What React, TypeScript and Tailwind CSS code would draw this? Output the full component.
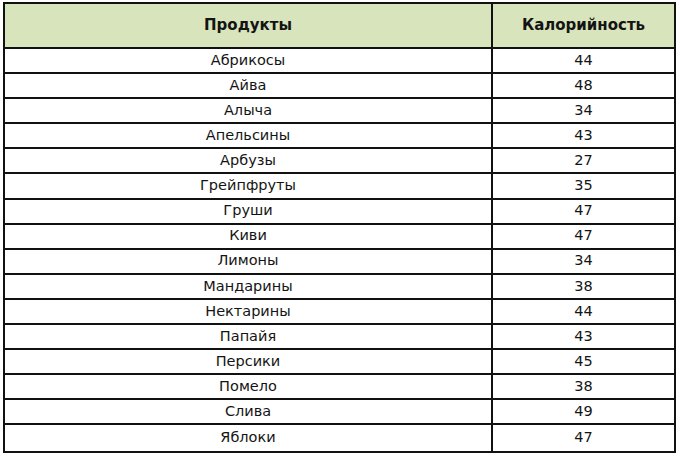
const ROWS: [string, number][] = [
  ['Абрикосы', 44],
  ['Айва', 48],
  ['Алыча', 34],
  ['Апельсины', 43],
  ['Арбузы', 27],
  ['Грейпфруты', 35],
  ['Груши', 47],
  ['Киви', 47],
  ['Лимоны', 34],
  ['Мандарины', 38],
  ['Нектарины', 44],
  ['Папайя', 43],
  ['Персики', 45],
  ['Помело', 38],
  ['Слива', 49],
  ['Яблоки', 47],
]

const FONT = "font-['Verdana','DejaVu_Sans',sans-serif]"

export default function App() {
  return (
    <div className={`h-[456px] w-[680px] bg-white pl-[3px] pt-[2px] text-[#141414] ${FONT}`}>
      <div className="flex w-[673px] flex-col border-2 border-[#111]">
        <div className="flex h-[45px] border-b-2 border-[#111] bg-[#d8e4bc] text-[15px] font-bold">
          <div className="flex w-[488px] items-center justify-center border-r-2 border-[#111]">
            Продукты
          </div>
          <div className="flex flex-1 items-center justify-center">Калорийность</div>
        </div>
        {ROWS.map(([name, kcal], i) => (
          <div
            key={name}
            className={`flex h-[25.1px] text-[14.5px] ${i < ROWS.length - 1 ? 'border-b-2 border-[#111]' : ''}`}
          >
            <div className="flex w-[488px] items-center justify-center border-r-2 border-[#111]">
              {name}
            </div>
            <div className="flex flex-1 items-center justify-center">{kcal}</div>
          </div>
        ))}
      </div>
    </div>
  )
}
